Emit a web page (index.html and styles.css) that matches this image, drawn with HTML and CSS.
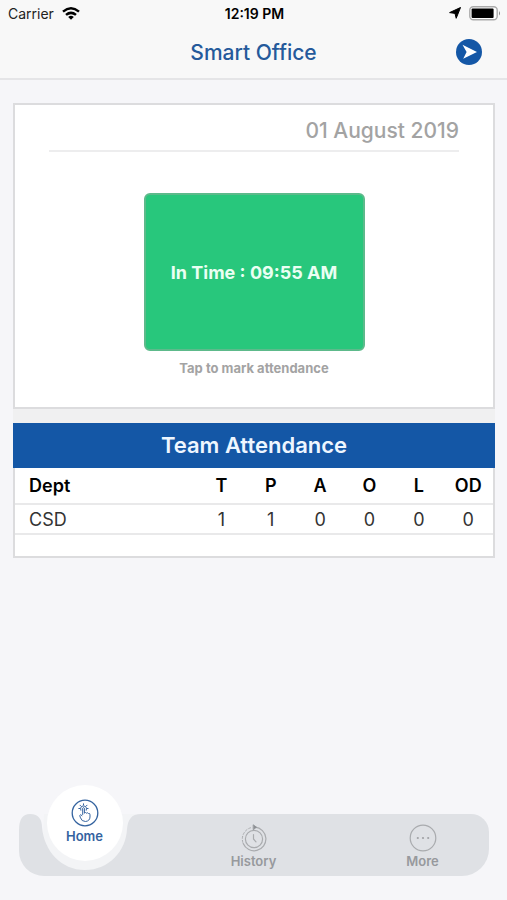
FILE: index.html
```html
<!DOCTYPE html>
<html lang="en">
<head>
<meta charset="utf-8">
<meta name="viewport" content="width=device-width, initial-scale=1">
<title>Smart Office</title>
<link rel="stylesheet" href="styles.css">
</head>
<body>
<header class="top">
  <div class="status">
    <div class="carrier">Carrier
      <svg width="18" height="13" viewBox="0 0 18 13" aria-hidden="true"><g fill="none" stroke="#000" stroke-width="2.5"><path d="M1 4.6Q9-2 17 4.6"/><path d="M4 7.9Q9 3.8 14 7.9"/></g><path d="M6.2 9.9Q9 7.8 11.8 9.9L9 12.8Z"/></svg>
    </div>
    <time class="clock">12:19 PM</time>
    <div class="indicators">
      <svg width="12" height="12" viewBox="0 0 12 12" aria-hidden="true"><path d="M11.5.5 7.2 11.3 6 6.4.6 5.6Z" stroke="#000" stroke-width="1" stroke-linejoin="round"/></svg>
      <svg width="32" height="15" viewBox="0 0 32 15" aria-hidden="true"><rect x=".8" y=".8" width="27.4" height="13" rx="3.5" fill="#fff" stroke="#aaa" stroke-width="1.4"/><rect x="2.6" y="2.6" width="22" height="9.4" rx="1"/><path d="M30 5Q32 7.3 30 9.6Z" fill="#888"/></svg>
    </div>
  </div>
  <div class="titlebar">
    <h1 class="title">Smart Office</h1>
    <button class="send" aria-label="Send"><svg width="26" height="26" viewBox="0 0 26 26"><circle cx="13" cy="13" r="13" fill="#1457a6"/><path d="M6.5 5.8 21 13 7.2 19.8 10.6 13Z" fill="#fff"/></svg></button>
  </div>
</header>

<main class="content">
  <section class="card checkin">
    <p class="date">01 August 2019</p>
    <button class="mark">In Time : 09:55 AM</button>
    <p class="hint">Tap to mark attendance</p>
  </section>
  <section class="card team">
    <h2 class="team-title">Team Attendance</h2>
    <table class="grid">
      <thead><tr><th class="dept">Dept</th><th>T</th><th>P</th><th>A</th><th>O</th><th>L</th><th>OD</th></tr></thead>
      <tbody><tr><td class="dept">CSD</td><td>1</td><td>1</td><td>0</td><td>0</td><td>0</td><td>0</td></tr></tbody>
    </table>
  </section>
</main>

<nav class="tabs">
  <div class="backdrop" aria-hidden="true">
    <svg width="130" height="62" viewBox="0 0 130 62"><path d="M25 0H117V46L66 62L23 44Z" fill="#f3f4f6"/><path d="M0 16Q0 0 11 0C20 0 23 6 23 13C25 37 42 56 66 56C90 56 107 37 108 15C109 6 112 0 122 0H130V62H25A25 25 0 0 1 0 37Z" fill="#dfe1e5"/></svg>
    <div class="backdrop-rest"></div>
  </div>
  <a class="tab active" href="#home">
    <svg width="28" height="28" viewBox="0 0 28 28" fill="none" stroke="#34639f" stroke-linecap="round" stroke-linejoin="round" aria-hidden="true"><circle cx="14" cy="14" r="12.8" stroke-width="1.3"/><path d="M11.7 15.5V9.2Q12.5 7.8 13.4 9.2V14.2Q14.5 12.8 15.6 14.2Q16.7 13.2 17.5 14.5Q19 14 19 15.8V18Q18.8 22 14.5 22.5Q10.5 22.5 9.5 18.8L8.7 16.5Q9.3 14.8 11 16.6M12.5 4.8V6M9 6.2 9.9 7.1M16 6.2 15.2 7.1M7.8 9.5H9M16 9.5H17.1M9.8 11.2Q8.8 7 12.5 7Q16.3 7 15.3 11.2" stroke-width="1"/></svg>
    <span>Home</span>
  </a>
  <a class="tab" href="#history">
    <svg width="28" height="28" viewBox="0 0 28 28" fill="none" stroke="#a9abae" stroke-linecap="round" stroke-linejoin="round" aria-hidden="true"><path d="M15 3.2A11.8 11.8 0 1 1 3.2 19.5" stroke-width="1.2"/><path d="M10.5 3.8A11.8 11.8 0 0 0 3.2 19.5" stroke-width="1" stroke-dasharray="2 2"/><path d="M13.5 1 16.5 3.2 13.5 5.5Z" fill="#8d9094" stroke="#8d9094" stroke-width=".8"/><circle cx="14" cy="15" r="8.6" stroke-width="1.2"/><path d="M13.5 10.5V15L16 17.8" stroke-width="1.2"/></svg>
    <span>History</span>
  </a>
  <a class="tab" href="#more">
    <svg width="28" height="28" viewBox="0 0 28 28" aria-hidden="true"><circle cx="14" cy="14" r="12.8" fill="none" stroke="#a9abae" stroke-width="1.2"/><g fill="#a0a2a5"><circle cx="8.8" cy="14" r="1.1"/><circle cx="14" cy="14" r="1.1"/><circle cx="19.2" cy="14" r="1.1"/></g></svg>
    <span>More</span>
  </a>
</nav>
</body>
</html>
```
FILE: styles.css
```css
* { box-sizing: border-box; }

body {
  margin: 0;
  min-height: 100vh;
  display: flex;
  flex-direction: column;
  background: #f6f6f9;
  color: #000;
  font-family: Inter, "Open Sans", sans-serif;
}

h1, h2, p { margin: 0; }
svg { display: block; flex: none; }

button {
  border: 0;
  padding: 0;
  font: inherit;
  cursor: pointer;
}

.top {
  background: #f8f8f8;
  border-bottom: 2px solid #e5e5e7;
}

.status {
  display: grid;
  grid-template-columns: 1fr auto 1fr;
  align-items: center;
  height: 26px;
  padding: 0 6px 0 8px;
  font-size: 14px;
}

.carrier, .indicators {
  display: flex;
  align-items: center;
  gap: 8px;
  color: #222;
}

.indicators { justify-content: flex-end; }
.clock { font-weight: 600; }

.titlebar {
  display: grid;
  grid-template-columns: 1fr auto 1fr;
  align-items: center;
  height: 52px;
  padding: 0 25px;
}

.title {
  grid-column: 2;
  color: #255a9b;
  font-size: 21px;
  font-weight: 500;
}

.send {
  justify-self: end;
  border-radius: 50%;
  background: none;
}

.content {
  display: flex;
  flex-direction: column;
  gap: 14px;
  margin: 23px 12px 0 13px;
  background: #f0f0f1;
}

.card {
  background: #fff;
  border: 2px solid #dcdcde;
}

.checkin {
  display: flex;
  flex-direction: column;
  align-items: center;
  padding: 12px 34px 29px;
}

.date {
  align-self: stretch;
  padding-bottom: 5px;
  border-bottom: 2px solid #ededee;
  color: #a3a3a3;
  font-size: 21px;
  font-weight: 500;
  line-height: 28px;
  text-align: right;
}

.mark {
  width: 221px;
  max-width: 100%;
  height: 158px;
  margin: 41px 0 7px;
  border: 2px solid #5dba8b;
  border-radius: 6px;
  background: #28c77c;
  color: #eafff3;
  font-size: 18px;
  font-weight: 700;
}

.hint {
  color: #a3a3a3;
  font-size: 13px;
  font-weight: 700;
  line-height: 20px;
}

.team { padding-bottom: 21px; }

.team-title {
  margin: -2px -2px 0;
  background: #1457a6;
  color: #eef6ff;
  font-size: 22px;
  font-weight: 600;
  line-height: 45px;
  text-align: center;
}

.grid {
  width: 100%;
  border-collapse: collapse;
  table-layout: fixed;
  font-size: 18px;
}

.grid th, .grid td {
  padding: 0;
  border-bottom: 2px solid #e9e9ea;
  text-align: center;
}

.grid th {
  height: 36px;
  font-weight: 600;
}

.grid td {
  height: 30px;
  color: #333;
}

.grid .dept {
  width: 38%;
  padding-left: 14px;
  text-align: left;
}

.tabs {
  position: relative;
  display: grid;
  grid-template-columns: repeat(3, 1fr);
  margin: auto 0 24px;
  height: 62px;
}

.backdrop {
  position: absolute;
  inset: 0 18px 0 19px;
  display: flex;
}

.backdrop-rest {
  flex: 1;
  background: #dfe1e5;
  border-radius: 0 18px 27px 0;
}

.tab {
  position: relative;
  display: flex;
  flex-direction: column;
  align-items: center;
  padding-top: 10px;
  color: #97999d;
  font-size: 13px;
  font-weight: 600;
  line-height: 18px;
  text-decoration: none;
}

.tab.active {
  justify-self: center;
  width: 76px;
  height: 76px;
  margin-top: -29px;
  padding-top: 14px;
  border-radius: 50%;
  background: #fff;
  color: #34639f;
}
```
